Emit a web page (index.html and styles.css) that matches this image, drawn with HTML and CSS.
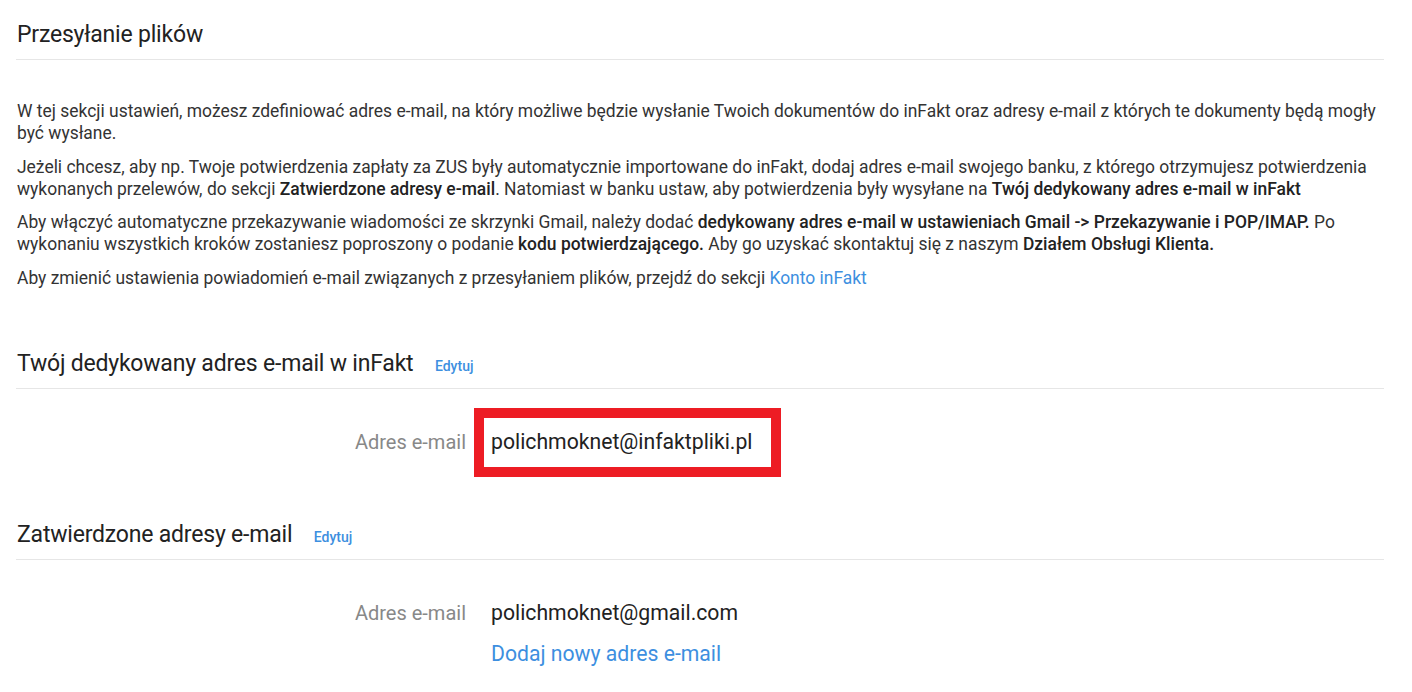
FILE: index.html
```html
<!DOCTYPE html>
<html lang="pl">
<head>
<meta charset="utf-8">
<title>Przesyłanie plików</title>
<link rel="stylesheet" href="styles.css">
</head>
<body>
<div class="page">
  <section class="section section-intro">
    <h2 class="section-title">Przesyłanie plików</h2>
    <div class="intro">
      <p>W tej sekcji ustawień, możesz zdefiniować adres e-mail, na który możliwe będzie wysłanie Twoich dokumentów do inFakt oraz adresy e-mail z których te dokumenty będą mogły być wysłane.</p>
      <p>Jeżeli chcesz, aby np. Twoje potwierdzenia zapłaty za ZUS były automatycznie importowane do inFakt, dodaj adres e-mail swojego banku, z którego otrzymujesz potwierdzenia wykonanych przelewów, do sekcji <strong>Zatwierdzone adresy e-mail</strong>. Natomiast w banku ustaw, aby potwierdzenia były wysyłane na <strong>Twój dedykowany adres e-mail w inFakt</strong></p>
      <p>Aby włączyć automatyczne przekazywanie wiadomości ze skrzynki Gmail, należy dodać <strong>dedykowany adres e-mail w ustawieniach Gmail -&gt; Przekazywanie i POP/IMAP.</strong> Po wykonaniu wszystkich kroków zostaniesz poproszony o podanie <strong>kodu potwierdzającego.</strong> Aby go uzyskać skontaktuj się z naszym <strong>Działem Obsługi Klienta.</strong></p>
      <p>Aby zmienić ustawienia powiadomień e-mail związanych z przesyłaniem plików, przejdź do sekcji <a href="#" class="link">Konto inFakt</a></p>
    </div>
  </section>

  <section class="section section-dedicated">
    <h2 class="section-title">Twój dedykowany adres e-mail w inFakt <a href="#" class="edit">Edytuj</a></h2>
    <div class="fields">
      <div class="field">
        <div class="field-label">Adres e-mail</div>
        <div class="field-value"><span class="highlight">polichmoknet@infaktpliki.pl</span></div>
      </div>
    </div>
  </section>

  <section class="section section-approved">
    <h2 class="section-title">Zatwierdzone adresy e-mail <a href="#" class="edit">Edytuj</a></h2>
    <div class="fields">
      <div class="field">
        <div class="field-label">Adres e-mail</div>
        <div class="field-value">
          <div class="value-line">polichmoknet@gmail.com</div>
          <a href="#" class="add-link">Dodaj nowy adres e-mail</a>
        </div>
      </div>
    </div>
  </section>
</div>
</body>
</html>
```

FILE: styles.css
```css
* { box-sizing: border-box; }

html, body {
  margin: 0;
  padding: 0;
  background: #ffffff;
}

body {
  font-family: Roboto, "Liberation Sans", Arial, sans-serif;
  color: #333333;
}

.page {
  padding: 20px 28px 0 16px;
}

.section-title {
  margin: 0;
  padding: 0 0 9px 1px;
  font-family: Roboto, "Liberation Sans", sans-serif;
  font-weight: 400;
  font-size: 23px;
  line-height: 30px;
  color: #222222;
  letter-spacing: -0.2px;
  border-bottom: 1px solid #e6e6e6;
}

.edit {
  margin-left: 16px;
  font-size: 14px;
  line-height: 1;
  font-weight: 500;
  color: #3d8fe0;
  text-decoration: none;
  letter-spacing: 0;
}

.intro {
  padding: 40px 0 0 1px;
}

.intro p {
  margin: 0 0 11.5px;
  font-size: 17.45px;
  line-height: 22px;
}

.intro strong {
  font-weight: 500;
  color: #222222;
}

.link {
  color: #3d8fe0;
  text-decoration: none;
}

.section-dedicated {
  margin-top: 60px;
}

.section-approved {
  margin-top: 64px;
}

.fields {
  padding-top: 39px;
}

.field {
  display: flex;
  align-items: baseline;
  gap: 25px;
}

.field-label {
  width: 450px;
  text-align: right;
  font-size: 20px;
  line-height: 28px;
  color: #888888;
}

.field-value {
  font-size: 21.2px;
  line-height: 28px;
  color: #222222;
}

.value-line {
  margin-bottom: 13px;
}

.highlight {
  position: relative;
  display: inline-block;
}

.highlight::after {
  content: "";
  position: absolute;
  left: -17px;
  right: -29px;
  top: -20px;
  bottom: -21px;
  border: 10px solid #ed1c24;
}

.add-link {
  color: #3d8fe0;
  text-decoration: none;
}
```
